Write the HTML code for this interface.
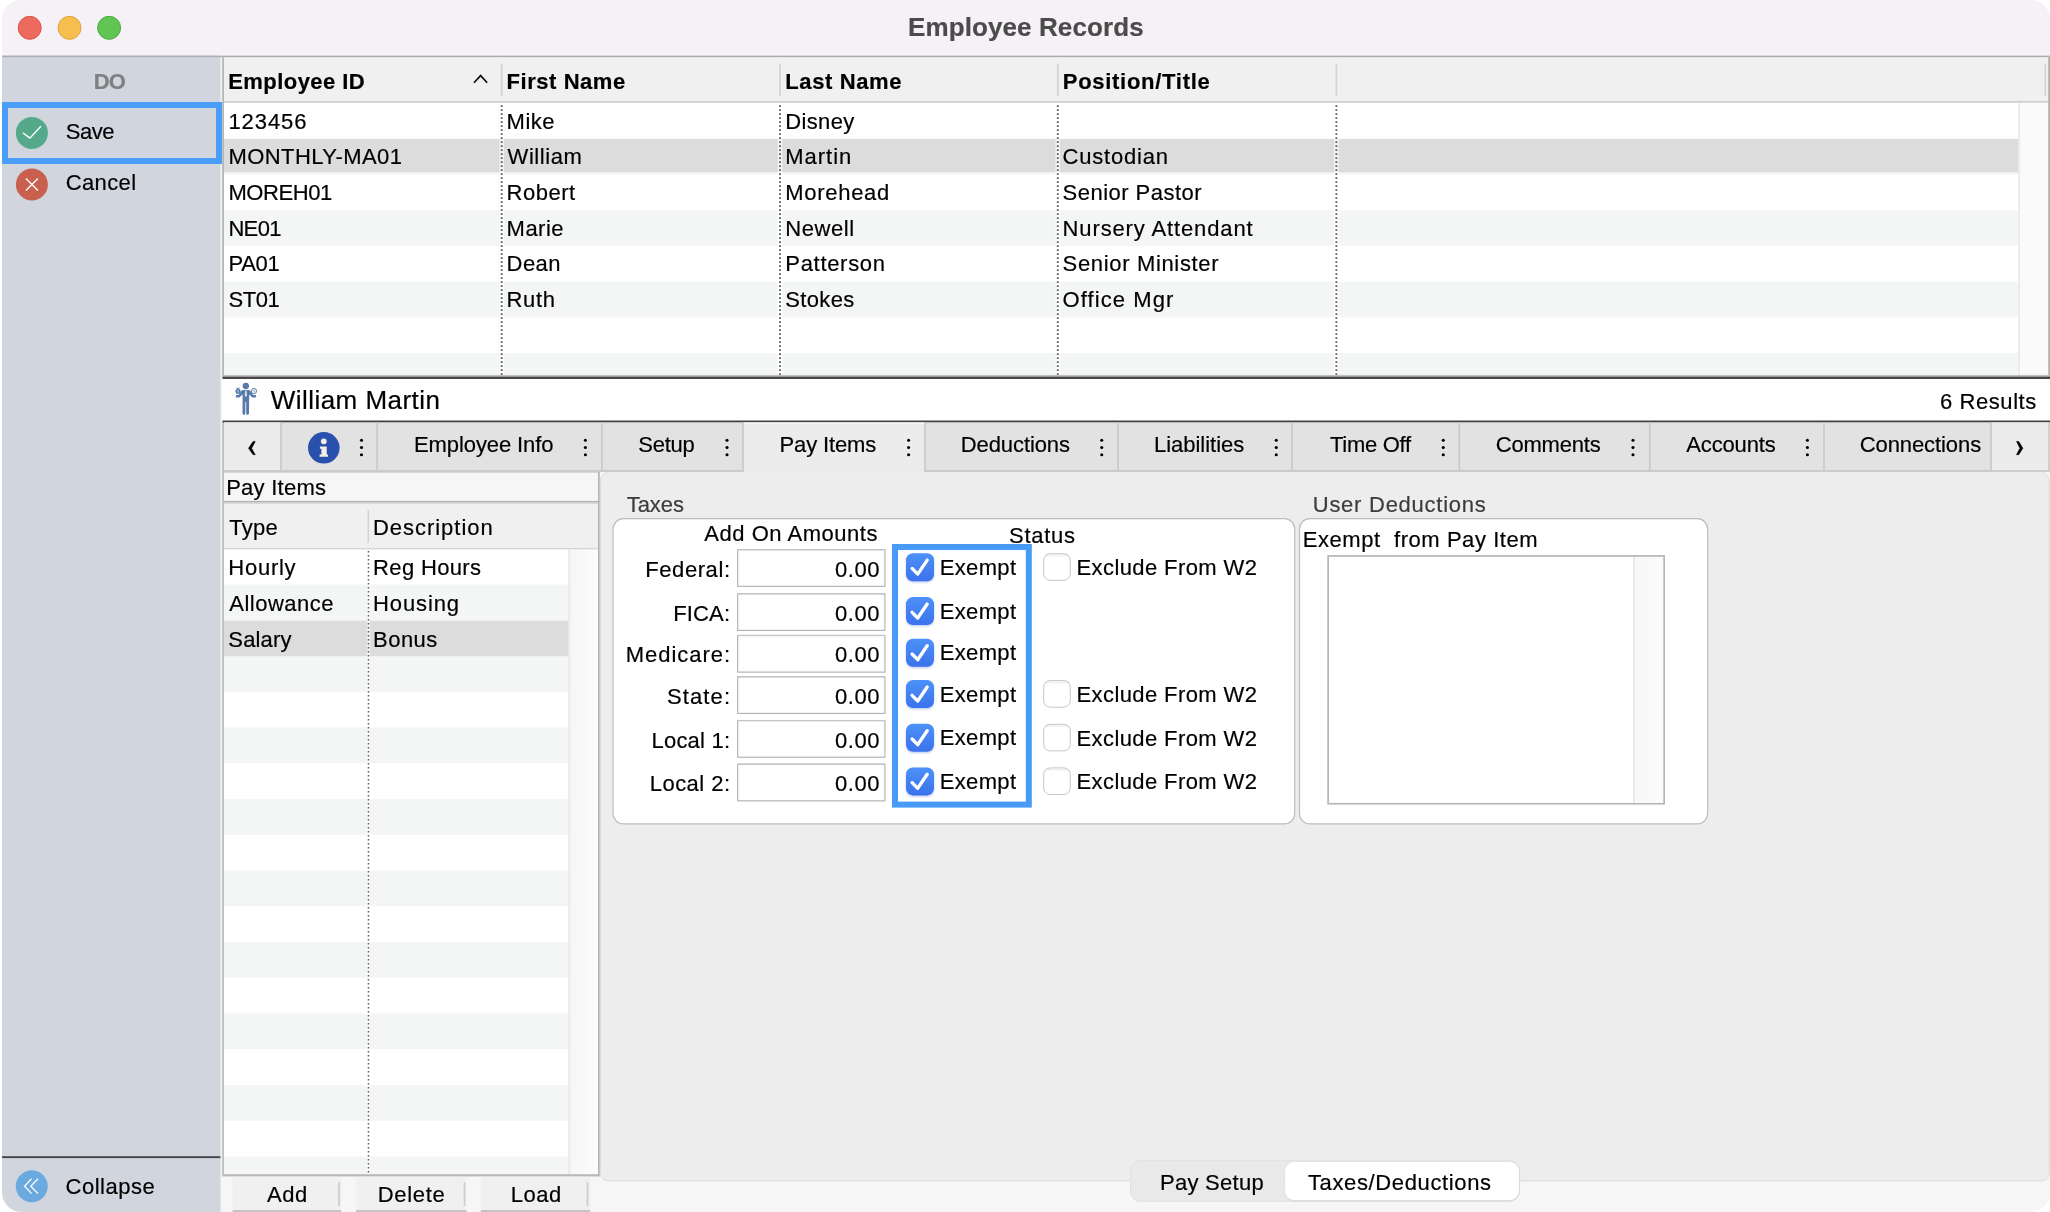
<!DOCTYPE html>
<html lang="en">
<head>
<meta charset="utf-8">
<title>Employee Records</title>
<style>
html,body{margin:0;padding:0;background:#fff;}
body{width:2050px;height:1212px;position:relative;overflow:hidden;font-family:"Liberation Sans",sans-serif;}
#win{position:absolute;left:0;top:0;width:2050px;height:1212px;background:#f6f6f6;clip-path:inset(0 0 0 2px round 20px);}
#g{position:absolute;left:0;top:0;display:block;}
#txt{position:absolute;left:0;top:0;width:2050px;height:1212px;will-change:transform;}
#txt span{position:absolute;white-space:pre;line-height:1;font-size:22px;color:#000;-webkit-text-stroke:.2px currentColor;}
</style>
</head>
<body>
<div id="win">
<svg id="g" width="2050" height="1212" viewBox="0 0 2050 1212">
<defs><linearGradient id="gcb" x1="0" y1="0" x2="0" y2="1"><stop offset="0" stop-color="#4d91f8"/><stop offset="1" stop-color="#3b72eb"/></linearGradient><linearGradient id="gtrk" x1="0" y1="0" x2="1" y2="0"><stop offset="0" stop-color="#f6f6f6"/><stop offset="1" stop-color="#fcfcfc"/></linearGradient><filter id="sh" x="-20%" y="-20%" width="140%" height="150%"><feGaussianBlur stdDeviation="0.9"/></filter></defs>
<rect x="0" y="0" width="2050" height="1212" fill="#f6f6f6"/>
<rect x="0" y="0" width="2050" height="56" fill="#f6f1f7"/>
<rect x="0" y="55.5" width="2050" height="0.9" fill="#c4c3c7"/>
<rect x="0" y="56.3" width="2050" height="1.1" fill="#979797"/>
<rect x="0" y="55.5" width="220.7" height="0.9" fill="#c8c8d0"/>
<rect x="0" y="56.3" width="220.7" height="1.1" fill="#a6adb8"/>
<circle cx="29.7" cy="27.8" r="11.5" fill="#ed6a5e" stroke="#dc5448" stroke-width="1"/>
<circle cx="69.5" cy="27.8" r="11.5" fill="#f5bf4f" stroke="#dea33a" stroke-width="1"/>
<circle cx="109.1" cy="27.8" r="11.5" fill="#61c554" stroke="#4cab3f" stroke-width="1"/>
<rect x="0" y="57.4" width="220.7" height="1155" fill="#d1d5de"/>
<g transform="translate(15.9,116.9)"><circle cx="16" cy="16" r="16" fill="#55a98a"/><path d="M7.1 16 L14 21.2 L25 9.4" fill="none" stroke="#fff" stroke-width="1.35"/></g>
<g transform="translate(15.9,168.5)"><circle cx="16" cy="16" r="16" fill="#c9604f"/><path d="M10 10.1 L22 21.9 M22 10.1 L10 21.9" fill="none" stroke="#fff" stroke-width="1.35"/></g>
<rect x="0" y="1156.2" width="220.7" height="1.9" fill="#454545"/>
<g transform="translate(15.75,1170.25)"><circle cx="16" cy="16" r="16" fill="#6aaade"/><path d="M15.85 8.35 L8.85 15.95 L15.85 23.35 M22.25 8.35 L15.05 15.95 L22.25 23.35" fill="none" stroke="#fff" stroke-width="1.3"/></g>
<rect x="220.7" y="57.4" width="1.6" height="1155" fill="#f3f3f3"/>
<rect x="5" y="105" width="214" height="56" fill="none" stroke="#4a9df8" stroke-width="6"/>
<rect x="222.2" y="57.4" width="1.8" height="319" fill="#b6b6b6"/>
<rect x="222.2" y="422.6" width="1.8" height="753.8" fill="#bebebe"/>
<rect x="224" y="57.4" width="1824.2" height="44" fill="#f0f0f0"/>
<rect x="224" y="101.1" width="1824.2" height="1.7" fill="#cbcbcb"/>
<rect x="224" y="102.8" width="1794.4" height="272.2" fill="#ffffff"/>
<rect x="224" y="138.65" width="1794.4" height="35.75" fill="#f4f5f5"/>
<rect x="224" y="210.15" width="1794.4" height="35.75" fill="#f4f5f5"/>
<rect x="224" y="281.65" width="1794.4" height="35.75" fill="#f4f5f5"/>
<rect x="224" y="353.15" width="1794.4" height="21.75" fill="#f4f5f5"/>
<rect x="224" y="139" width="1794.4" height="33.3" fill="#dcdcdc"/>
<rect x="2018.4" y="102.8" width="29.8" height="272.2" fill="#fafafa"/>
<rect x="2018.4" y="102.8" width="1.4" height="272.2" fill="#e7e7e7"/>
<rect x="2048.2" y="57.4" width="1.8" height="319" fill="#b2b2b2"/>
<rect x="500.9" y="63.5" width="1.6" height="32.5" fill="#d2d2d2"/>
<rect x="779.2" y="63.5" width="1.6" height="32.5" fill="#d2d2d2"/>
<rect x="1057" y="63.5" width="1.6" height="32.5" fill="#d2d2d2"/>
<rect x="1335.6" y="63.5" width="1.6" height="32.5" fill="#d2d2d2"/>
<rect x="2044.5" y="63.5" width="1.6" height="32.5" fill="#d2d2d2"/>
<rect x="499.4" y="103" width="4.6" height="272" fill="#ffffff" opacity=".65"/>
<line x1="501.7" y1="105.15" x2="501.7" y2="374.9" stroke="#626262" stroke-width="1.9" stroke-dasharray="1.9 2.1"/>
<rect x="777.7" y="103" width="4.6" height="272" fill="#ffffff" opacity=".65"/>
<line x1="780" y1="105.15" x2="780" y2="374.9" stroke="#626262" stroke-width="1.9" stroke-dasharray="1.9 2.1"/>
<rect x="1055.5" y="103" width="4.6" height="272" fill="#ffffff" opacity=".65"/>
<line x1="1057.8" y1="105.15" x2="1057.8" y2="374.9" stroke="#626262" stroke-width="1.9" stroke-dasharray="1.9 2.1"/>
<rect x="1334.1" y="103" width="4.6" height="272" fill="#ffffff" opacity=".65"/>
<line x1="1336.4" y1="105.15" x2="1336.4" y2="374.9" stroke="#626262" stroke-width="1.9" stroke-dasharray="1.9 2.1"/>
<path d="M474 82.8 L480.6 75.6 L487.2 82.8" fill="none" stroke="#111" stroke-width="1.7"/>
<rect x="222.5" y="374.9" width="1828" height="1.7" fill="#c0c0c0"/>
<rect x="222.5" y="376.6" width="1828" height="2.4" fill="#484848"/>
<rect x="222.5" y="379" width="1828" height="41.6" fill="#ffffff"/>
<rect x="222.5" y="420.5" width="1828" height="2.1" fill="#444444"/>
<g fill="#5879ab">
<circle cx="245.85" cy="386" r="3.15"/>
<path d="M243.4 389.9 H248.4 C249.6 389.9 250.3 390.6 250.9 391.6 L253.2 395 L255 395 a1.2 1.2 0 0 1 0 2.4 L252.4 397.4 L249.3 394.6 L249.1 401 L249 413.4 a1.4 1.4 0 0 1 -2.8 0 L246.2 402 L245.4 402 L245.3 413.4 a1.4 1.4 0 0 1 -2.8 0 L242.6 401 L242.5 394.6 L239.4 397.4 L236.9 397.4 a1.2 1.2 0 0 1 0 -2.4 L238.6 395 L240.9 391.6 C241.5 390.6 242.2 389.9 243.4 389.9 Z"/>
<circle cx="238.05" cy="391.3" r="2.6"/>
<path d="M236.5 387.1 L238 388.5 L239.6 387.1 L239.1 389 L237 389 Z"/>
</g>
<rect x="237.55" y="389.9" width="1" height="2.8" fill="#c9d4e6"/>
<path d="M245.4 390.3 H246.4 L247 395.5 L245.9 396.9 L244.8 395.5 Z" fill="#dfe6f1"/>
<circle cx="254" cy="391" r="2.6" fill="#f4f6fa" stroke="#5879ab" stroke-width=".9"/>
<path d="M254 389.6 V391.2 H255.2" fill="none" stroke="#5879ab" stroke-width=".6"/>
<rect x="224" y="422.5" width="1826" height="47.6" fill="#e2e2e2"/>
<rect x="224" y="470" width="1826" height="2.1" fill="#cbcbcb"/>
<rect x="224" y="471.9" width="376" height="0.9" fill="#b9b9b9"/>
<rect x="224" y="422.5" width="56.2" height="47.6" fill="#ececec"/>
<rect x="1991.9" y="422.5" width="56.5" height="47.6" fill="#ececec"/>
<rect x="743.9" y="422.5" width="180.2" height="50.2" fill="#ececec"/>
<rect x="743.9" y="422.7" width="180.2" height="1.1" fill="#f7f7f7"/>
<rect x="280.1" y="422.5" width="1.8" height="47.8" fill="#cbcbcb"/>
<rect x="376.2" y="422.5" width="1.8" height="47.8" fill="#cbcbcb"/>
<rect x="601" y="422.5" width="1.8" height="47.8" fill="#cbcbcb"/>
<rect x="742" y="422.5" width="1.8" height="47.8" fill="#cbcbcb"/>
<rect x="924.1" y="422.5" width="1.8" height="47.8" fill="#cbcbcb"/>
<rect x="1117.1" y="422.5" width="1.8" height="47.8" fill="#cbcbcb"/>
<rect x="1291.1" y="422.5" width="1.8" height="47.8" fill="#cbcbcb"/>
<rect x="1458.4" y="422.5" width="1.8" height="47.8" fill="#cbcbcb"/>
<rect x="1648.9" y="422.5" width="1.8" height="47.8" fill="#cbcbcb"/>
<rect x="1823.1" y="422.5" width="1.8" height="47.8" fill="#cbcbcb"/>
<rect x="1990.1" y="422.5" width="1.8" height="47.8" fill="#cbcbcb"/>
<rect x="2048.3" y="422.5" width="1.8" height="47.8" fill="#cbcbcb"/>
<g transform="translate(307.8,431.8)"><circle cx="16" cy="16" r="15.8" fill="#2a50ae"/><circle cx="16" cy="9.5" r="2.9" fill="#f4efe6"/><path d="M12.1 14.7 H18.9 V22.7 H20.2 V25 H11.8 V22.7 H13.6 V16.9 H12.1 Z" fill="#f4efe6"/></g>
<circle cx="361.5" cy="440.2" r="1.55"/>
<circle cx="361.5" cy="447.5" r="1.55"/>
<circle cx="361.5" cy="454.8" r="1.55"/>
<circle cx="585.4" cy="440.2" r="1.55"/>
<circle cx="585.4" cy="447.5" r="1.55"/>
<circle cx="585.4" cy="454.8" r="1.55"/>
<circle cx="727" cy="440.2" r="1.55"/>
<circle cx="727" cy="447.5" r="1.55"/>
<circle cx="727" cy="454.8" r="1.55"/>
<circle cx="908.6" cy="440.2" r="1.55"/>
<circle cx="908.6" cy="447.5" r="1.55"/>
<circle cx="908.6" cy="454.8" r="1.55"/>
<circle cx="1101.75" cy="440.2" r="1.55"/>
<circle cx="1101.75" cy="447.5" r="1.55"/>
<circle cx="1101.75" cy="454.8" r="1.55"/>
<circle cx="1276.25" cy="440.2" r="1.55"/>
<circle cx="1276.25" cy="447.5" r="1.55"/>
<circle cx="1276.25" cy="454.8" r="1.55"/>
<circle cx="1443.25" cy="440.2" r="1.55"/>
<circle cx="1443.25" cy="447.5" r="1.55"/>
<circle cx="1443.25" cy="454.8" r="1.55"/>
<circle cx="1633" cy="440.2" r="1.55"/>
<circle cx="1633" cy="447.5" r="1.55"/>
<circle cx="1633" cy="454.8" r="1.55"/>
<circle cx="1807.4" cy="440.2" r="1.55"/>
<circle cx="1807.4" cy="447.5" r="1.55"/>
<circle cx="1807.4" cy="454.8" r="1.55"/>
<path d="M253.1 441.4 L255.3 441.4 L251.6 448.3 L255.3 454.7 L253.1 454.7 L248.5 448.3 Z" stroke="#000" stroke-width=".5" stroke-linejoin="round"/>
<path d="M2016.5 441.4 L2018.7 441.4 L2022.9 448.2 L2018.7 454.7 L2016.5 454.7 L2019.9 448.2 Z" stroke="#000" stroke-width=".5" stroke-linejoin="round"/>
<rect x="224" y="472.6" width="374.2" height="28.4" fill="#f6f6f6"/>
<rect x="224" y="500.9" width="375.6" height="1.5" fill="#b2b2b2"/>
<rect x="224" y="502.4" width="375.6" height="1.4" fill="#c9c9c9"/>
<rect x="598" y="472.6" width="1.7" height="31" fill="#b4b4b4"/>
<rect x="224" y="503.8" width="374" height="44.5" fill="#f0f0f0"/>
<rect x="224" y="548.1" width="374" height="1.5" fill="#d2d2d2"/>
<rect x="224" y="549.5" width="344.5" height="625" fill="#ffffff"/>
<rect x="224" y="584.5" width="344.5" height="35.75" fill="#f4f5f5"/>
<rect x="224" y="656" width="344.5" height="35.75" fill="#f4f5f5"/>
<rect x="224" y="727.5" width="344.5" height="35.75" fill="#f4f5f5"/>
<rect x="224" y="799" width="344.5" height="35.75" fill="#f4f5f5"/>
<rect x="224" y="870.5" width="344.5" height="35.75" fill="#f4f5f5"/>
<rect x="224" y="942" width="344.5" height="35.75" fill="#f4f5f5"/>
<rect x="224" y="1013.5" width="344.5" height="35.75" fill="#f4f5f5"/>
<rect x="224" y="1085" width="344.5" height="35.75" fill="#f4f5f5"/>
<rect x="224" y="1156.5" width="344.5" height="17.9" fill="#f4f5f5"/>
<rect x="224" y="620.6" width="344.5" height="35.6" fill="#dcdcdc"/>
<rect x="568.5" y="549.5" width="29.5" height="625" fill="url(#gtrk)"/>
<rect x="568.5" y="549.5" width="1.4" height="625" fill="#e6e6e6"/>
<rect x="598" y="503.8" width="1.7" height="672.6" fill="#b4b4b4"/>
<rect x="224" y="1174.2" width="375.7" height="2.2" fill="#b8b8b8"/>
<rect x="367.5" y="510" width="1.6" height="33" fill="#d2d2d2"/>
<rect x="366.75" y="550" width="3.4" height="624" fill="#ffffff" opacity=".6"/>
<line x1="368.45" y1="550.95" x2="368.45" y2="1174" stroke="#5c5c5c" stroke-width="1.5" stroke-dasharray="1.5 2.5"/>
<rect x="232.5" y="1177.5" width="108.7" height="32.6" fill="#f0f0f0"/>
<rect x="232.5" y="1210" width="108.7" height="2" fill="#c4c4c4"/>
<rect x="356.2" y="1177.5" width="110.2" height="32.6" fill="#f0f0f0"/>
<rect x="356.2" y="1210" width="110.2" height="2" fill="#c4c4c4"/>
<rect x="480.7" y="1177.5" width="109.5" height="32.6" fill="#f0f0f0"/>
<rect x="480.7" y="1210" width="109.5" height="2" fill="#c4c4c4"/>
<rect x="338.2" y="1182.2" width="1.7" height="23.8" fill="#cdcdcd"/>
<rect x="463.7" y="1182.2" width="1.7" height="23.8" fill="#cdcdcd"/>
<rect x="586.6" y="1182.2" width="1.7" height="23.8" fill="#cdcdcd"/>
<rect x="600.5" y="472.9" width="1448.6" height="708" rx="7.5" fill="#ededed" stroke="#dcdcdc" stroke-width="1"/>
<rect x="608" y="472" width="1434" height="1.6" fill="#ededed"/>
<rect x="743.9" y="469.8" width="180.2" height="3.6" fill="#ececec"/>
<rect x="613.075" y="518.675" width="681.65" height="305.25" rx="10.425" fill="#ffffff" stroke="#bdbdbd" stroke-width="1.15"/>
<rect x="1299.48" y="518.675" width="408.15" height="305.25" rx="10.425" fill="#ffffff" stroke="#bdbdbd" stroke-width="1.15"/>
<rect x="737.675" y="549.675" width="147.25" height="36.65" fill="#ffffff" stroke="#b2b2b2" stroke-width="1.15"/>
<rect x="737.7" y="549.1" width="147.2" height="1.2" fill="#c6c6c6"/>
<rect x="737.675" y="593.775" width="147.25" height="36.65" fill="#ffffff" stroke="#b2b2b2" stroke-width="1.15"/>
<rect x="737.7" y="593.2" width="147.2" height="1.2" fill="#c6c6c6"/>
<rect x="737.675" y="635.475" width="147.25" height="36.65" fill="#ffffff" stroke="#b2b2b2" stroke-width="1.15"/>
<rect x="737.7" y="634.9" width="147.2" height="1.2" fill="#c6c6c6"/>
<rect x="737.675" y="676.775" width="147.25" height="36.65" fill="#ffffff" stroke="#b2b2b2" stroke-width="1.15"/>
<rect x="737.7" y="676.2" width="147.2" height="1.2" fill="#c6c6c6"/>
<rect x="737.675" y="720.575" width="147.25" height="36.65" fill="#ffffff" stroke="#b2b2b2" stroke-width="1.15"/>
<rect x="737.7" y="720" width="147.2" height="1.2" fill="#c6c6c6"/>
<rect x="737.675" y="764.175" width="147.25" height="36.65" fill="#ffffff" stroke="#b2b2b2" stroke-width="1.15"/>
<rect x="737.7" y="763.6" width="147.2" height="1.2" fill="#c6c6c6"/>
<rect x="906" y="554.4000000000001" width="28" height="28" rx="7" fill="#3a66d8" opacity=".35" filter="url(#sh)"/>
<rect x="906" y="553.2" width="28" height="28" rx="7" fill="url(#gcb)"/>
<path transform="translate(906,553.2)" d="M6.1 15.2 L11.7 20.9 L21.2 6.9" fill="none" stroke="#fff" stroke-width="3.3" stroke-linecap="round" stroke-linejoin="round"/>
<rect x="1043.7" y="553.7" width="26.6" height="26.6" rx="6.5" fill="#fff" stroke="#c6c6c6" stroke-width="1"/>
<rect x="1045.2" y="554.5" width="23.6" height="2" rx="1" fill="#000" opacity=".05"/>
<rect x="906" y="598.3000000000001" width="28" height="28" rx="7" fill="#3a66d8" opacity=".35" filter="url(#sh)"/>
<rect x="906" y="597.1" width="28" height="28" rx="7" fill="url(#gcb)"/>
<path transform="translate(906,597.1)" d="M6.1 15.2 L11.7 20.9 L21.2 6.9" fill="none" stroke="#fff" stroke-width="3.3" stroke-linecap="round" stroke-linejoin="round"/>
<rect x="906" y="640.0" width="28" height="28" rx="7" fill="#3a66d8" opacity=".35" filter="url(#sh)"/>
<rect x="906" y="638.8" width="28" height="28" rx="7" fill="url(#gcb)"/>
<path transform="translate(906,638.8)" d="M6.1 15.2 L11.7 20.9 L21.2 6.9" fill="none" stroke="#fff" stroke-width="3.3" stroke-linecap="round" stroke-linejoin="round"/>
<rect x="906" y="681.3000000000001" width="28" height="28" rx="7" fill="#3a66d8" opacity=".35" filter="url(#sh)"/>
<rect x="906" y="680.1" width="28" height="28" rx="7" fill="url(#gcb)"/>
<path transform="translate(906,680.1)" d="M6.1 15.2 L11.7 20.9 L21.2 6.9" fill="none" stroke="#fff" stroke-width="3.3" stroke-linecap="round" stroke-linejoin="round"/>
<rect x="1043.7" y="680.6" width="26.6" height="26.6" rx="6.5" fill="#fff" stroke="#c6c6c6" stroke-width="1"/>
<rect x="1045.2" y="681.4" width="23.6" height="2" rx="1" fill="#000" opacity=".05"/>
<rect x="906" y="725.0" width="28" height="28" rx="7" fill="#3a66d8" opacity=".35" filter="url(#sh)"/>
<rect x="906" y="723.8" width="28" height="28" rx="7" fill="url(#gcb)"/>
<path transform="translate(906,723.8)" d="M6.1 15.2 L11.7 20.9 L21.2 6.9" fill="none" stroke="#fff" stroke-width="3.3" stroke-linecap="round" stroke-linejoin="round"/>
<rect x="1043.7" y="724.3" width="26.6" height="26.6" rx="6.5" fill="#fff" stroke="#c6c6c6" stroke-width="1"/>
<rect x="1045.2" y="725.0999999999999" width="23.6" height="2" rx="1" fill="#000" opacity=".05"/>
<rect x="906" y="768.6" width="28" height="28" rx="7" fill="#3a66d8" opacity=".35" filter="url(#sh)"/>
<rect x="906" y="767.4" width="28" height="28" rx="7" fill="url(#gcb)"/>
<path transform="translate(906,767.4)" d="M6.1 15.2 L11.7 20.9 L21.2 6.9" fill="none" stroke="#fff" stroke-width="3.3" stroke-linecap="round" stroke-linejoin="round"/>
<rect x="1043.7" y="767.9" width="26.6" height="26.6" rx="6.5" fill="#fff" stroke="#c6c6c6" stroke-width="1"/>
<rect x="1045.2" y="768.6999999999999" width="23.6" height="2" rx="1" fill="#000" opacity=".05"/>
<rect x="1328.15" y="555.95" width="336" height="247.8" fill="#ffffff" stroke="#b6b6b6" stroke-width="1.7"/>
<rect x="1633.2" y="557" width="29.8" height="245.6" fill="url(#gtrk)"/>
<rect x="1633.2" y="557" width="1.4" height="245.6" fill="#e5e5e5"/>
<rect x="1130.5" y="1160.7" width="389" height="40.6" rx="10" fill="#e9e9e9" stroke="#e0e0e0" stroke-width="1"/>
<rect x="1285" y="1162.6" width="234" height="38" rx="9" fill="#000" opacity=".08" filter="url(#sh)"/>
<rect x="1285" y="1162" width="234" height="38" rx="9" fill="#ffffff"/>
<rect x="895" y="547" width="133.8" height="257.6" fill="none" stroke="#479bf7" stroke-width="6"/>
</svg>
<div id="txt">
<span style="left:908.00px;top:13.80px;font-size:26px;font-weight:700;color:#4b4b4b;letter-spacing:0.104px;">Employee Records</span>
<span style="left:93.70px;top:70.75px;font-weight:700;color:#7f7f7f;letter-spacing:-0.838px;">DO</span>
<span style="left:65.70px;top:120.60px;letter-spacing:-0.440px;">Save</span>
<span style="left:65.70px;top:172.20px;letter-spacing:0.381px;">Cancel</span>
<span style="left:65.50px;top:1176.25px;letter-spacing:0.518px;">Collapse</span>
<span style="left:228.25px;top:70.60px;font-weight:700;letter-spacing:0.434px;">Employee ID</span>
<span style="left:506.50px;top:70.60px;font-weight:700;letter-spacing:0.557px;">First Name</span>
<span style="left:785.25px;top:70.60px;font-weight:700;letter-spacing:0.619px;">Last Name</span>
<span style="left:1062.75px;top:70.60px;font-weight:700;letter-spacing:0.713px;">Position/Title</span>
<span style="left:228.40px;top:110.50px;letter-spacing:0.933px;">123456</span>
<span style="left:506.60px;top:110.50px;letter-spacing:0.477px;">Mike</span>
<span style="left:785.30px;top:110.50px;letter-spacing:0.340px;">Disney</span>
<span style="left:228.40px;top:146.20px;letter-spacing:0.442px;">MONTHLY-MA01</span>
<span style="left:507.60px;top:146.20px;letter-spacing:0.556px;">William</span>
<span style="left:785.30px;top:146.20px;letter-spacing:0.962px;">Martin</span>
<span style="left:1062.60px;top:146.20px;letter-spacing:0.788px;">Custodian</span>
<span style="left:228.40px;top:181.90px;letter-spacing:-0.421px;">MOREH01</span>
<span style="left:506.60px;top:181.90px;letter-spacing:0.493px;">Robert</span>
<span style="left:785.30px;top:181.90px;letter-spacing:0.694px;">Morehead</span>
<span style="left:1062.60px;top:181.90px;letter-spacing:0.473px;">Senior Pastor</span>
<span style="left:228.40px;top:217.60px;letter-spacing:-0.654px;">NE01</span>
<span style="left:506.60px;top:217.60px;letter-spacing:0.467px;">Marie</span>
<span style="left:785.30px;top:217.60px;letter-spacing:0.561px;">Newell</span>
<span style="left:1062.60px;top:217.60px;letter-spacing:0.869px;">Nursery Attendant</span>
<span style="left:228.40px;top:253.30px;letter-spacing:-0.284px;">PA01</span>
<span style="left:506.60px;top:253.30px;letter-spacing:0.431px;">Dean</span>
<span style="left:785.30px;top:253.30px;letter-spacing:0.689px;">Patterson</span>
<span style="left:1062.60px;top:253.30px;letter-spacing:0.661px;">Senior Minister</span>
<span style="left:228.40px;top:289.00px;letter-spacing:-0.419px;">ST01</span>
<span style="left:506.60px;top:289.00px;letter-spacing:0.634px;">Ruth</span>
<span style="left:785.30px;top:289.00px;letter-spacing:0.337px;">Stokes</span>
<span style="left:1062.60px;top:289.00px;letter-spacing:1.074px;">Office Mgr</span>
<span style="left:270.70px;top:386.70px;font-size:26px;letter-spacing:0.464px;">William Martin</span>
<span style="left:1940.00px;top:390.50px;letter-spacing:0.573px;">6 Results</span>
<span style="left:414.00px;top:433.50px;letter-spacing:-0.096px;">Employee Info</span>
<span style="left:638.25px;top:433.50px;letter-spacing:-0.254px;">Setup</span>
<span style="left:779.50px;top:433.50px;letter-spacing:-0.133px;">Pay Items</span>
<span style="left:960.75px;top:433.50px;letter-spacing:-0.092px;">Deductions</span>
<span style="left:1154.00px;top:433.50px;letter-spacing:-0.025px;">Liabilities</span>
<span style="left:1330.00px;top:433.50px;letter-spacing:-0.288px;">Time Off</span>
<span style="left:1495.70px;top:433.50px;letter-spacing:-0.194px;">Comments</span>
<span style="left:1686.30px;top:433.50px;letter-spacing:-0.157px;">Accounts</span>
<span style="left:1859.70px;top:433.50px;letter-spacing:-0.081px;">Connections</span>
<span style="left:226.20px;top:477.00px;letter-spacing:0.248px;">Pay Items</span>
<span style="left:229.30px;top:517.00px;letter-spacing:0.244px;">Type</span>
<span style="left:372.90px;top:517.00px;letter-spacing:0.979px;">Description</span>
<span style="left:228.30px;top:557.00px;letter-spacing:0.744px;">Hourly</span>
<span style="left:373.10px;top:557.00px;letter-spacing:0.343px;">Reg Hours</span>
<span style="left:229.30px;top:592.80px;letter-spacing:0.482px;">Allowance</span>
<span style="left:373.10px;top:592.80px;letter-spacing:0.869px;">Housing</span>
<span style="left:228.30px;top:628.50px;letter-spacing:0.168px;">Salary</span>
<span style="left:373.10px;top:628.50px;letter-spacing:0.452px;">Bonus</span>
<span style="left:267.00px;top:1184.00px;letter-spacing:0.540px;">Add</span>
<span style="left:377.75px;top:1184.00px;letter-spacing:0.678px;">Delete</span>
<span style="left:510.75px;top:1184.00px;letter-spacing:0.511px;">Load</span>
<span style="left:626.75px;top:493.50px;color:#3c3c3c;letter-spacing:-0.059px;">Taxes</span>
<span style="left:1312.75px;top:493.70px;color:#3c3c3c;letter-spacing:0.740px;">User Deductions</span>
<span style="left:704.25px;top:523.25px;letter-spacing:0.532px;">Add On Amounts</span>
<span style="left:1009.00px;top:524.75px;letter-spacing:0.725px;">Status</span>
<span style="left:1302.75px;top:529.00px;letter-spacing:0.555px;">Exempt  from Pay Item</span>
<span style="left:645.25px;top:558.75px;letter-spacing:0.578px;">Federal:</span>
<span style="left:835.00px;top:558.75px;letter-spacing:0.552px;">0.00</span>
<span style="left:673.25px;top:602.50px;letter-spacing:0.132px;">FICA:</span>
<span style="left:835.00px;top:602.50px;letter-spacing:0.552px;">0.00</span>
<span style="left:625.75px;top:644.20px;letter-spacing:0.959px;">Medicare:</span>
<span style="left:835.00px;top:644.20px;letter-spacing:0.552px;">0.00</span>
<span style="left:667.00px;top:685.60px;letter-spacing:1.106px;">State:</span>
<span style="left:835.00px;top:685.60px;letter-spacing:0.552px;">0.00</span>
<span style="left:651.50px;top:729.50px;letter-spacing:0.207px;">Local 1:</span>
<span style="left:835.00px;top:729.50px;letter-spacing:0.552px;">0.00</span>
<span style="left:649.75px;top:773.25px;letter-spacing:0.457px;">Local 2:</span>
<span style="left:835.00px;top:773.25px;letter-spacing:0.552px;">0.00</span>
<span style="left:939.70px;top:556.70px;letter-spacing:0.344px;">Exempt</span>
<span style="left:1076.50px;top:556.90px;letter-spacing:0.404px;">Exclude From W2</span>
<span style="left:939.70px;top:600.60px;letter-spacing:0.344px;">Exempt</span>
<span style="left:939.70px;top:642.30px;letter-spacing:0.344px;">Exempt</span>
<span style="left:939.70px;top:683.60px;letter-spacing:0.344px;">Exempt</span>
<span style="left:1076.50px;top:683.80px;letter-spacing:0.404px;">Exclude From W2</span>
<span style="left:939.70px;top:727.30px;letter-spacing:0.344px;">Exempt</span>
<span style="left:1076.50px;top:727.50px;letter-spacing:0.404px;">Exclude From W2</span>
<span style="left:939.70px;top:770.90px;letter-spacing:0.344px;">Exempt</span>
<span style="left:1076.50px;top:771.10px;letter-spacing:0.404px;">Exclude From W2</span>
<span style="left:1160.00px;top:1172.20px;letter-spacing:0.265px;">Pay Setup</span>
<span style="left:1308.00px;top:1172.20px;letter-spacing:0.623px;">Taxes/Deductions</span>
</div>
</div>
</body>
</html>
